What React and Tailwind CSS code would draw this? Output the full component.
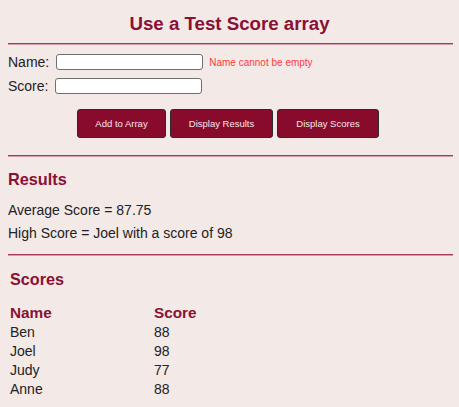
export default function App() {
  const rows = [
    ["Ben", 88],
    ["Joel", 98],
    ["Judy", 77],
    ["Anne", 88],
  ];
  const hr = "ml-[8px] mr-[6px] h-[2px] border-t border-b border-t-[#a83a5a] border-b-[#d59aaa]";
  const btn =
    "h-[29px] rounded-[3px] border border-[#2b2b2b] bg-[#880b2c] text-[9.5px] text-[#f6e6ea] leading-none flex items-center justify-center";
  return (
    <div className="w-[459px] h-[407px] bg-[#f3e9e7] text-[#222] font-['Liberation_Sans',Arial,sans-serif] overflow-hidden">
      <div className="pt-[13px] text-center text-[18.7px] leading-[22px] font-bold text-[#8a1034]">
        Use a Test Score array
      </div>
      <div className={`${hr} mt-[8px]`} />
      <div className="mt-[5px] pl-[8px] text-[14px]">
        <div className="h-[24px] flex items-center">
          <span>Name:</span>
          <div className="ml-[7px] w-[147px] h-[16px] bg-white border border-[#6f6f6f] rounded-[3px]" />
          <span className="ml-[6px] text-[10px] text-[#ff3a3a]">Name cannot be empty</span>
        </div>
        <div className="h-[24px] flex items-center">
          <span>Score:</span>
          <div className="ml-[6.5px] w-[147px] h-[16px] bg-white border border-[#6f6f6f] rounded-[3px]" />
        </div>
      </div>
      <div className="mt-[11px] flex pl-[77px] gap-[4px]">
        <div className={`${btn} w-[89px]`}>Add to Array</div>
        <div className={`${btn} w-[103px]`}>Display Results</div>
        <div className={`${btn} w-[102px]`}>Display Scores</div>
      </div>
      <div className={`${hr} mt-[17px]`} />
      <div className="pl-[8px]">
        <div className="mt-[12px] text-[16.3px] leading-[20px] font-bold text-[#8a1034]">Results</div>
        <div className="mt-[10px] text-[14px] leading-[23px]">Average Score = 87.75</div>
        <div className="text-[14px] leading-[23px]">High Score = Joel with a score of 98</div>
      </div>
      <div className={`${hr} mt-[9px]`} />
      <div className="pl-[10px]">
        <div className="mt-[13px] text-[16.2px] leading-[20px] font-bold text-[#8a1034]">Scores</div>
        <div className="mt-[15px]">
          <div className="flex h-[19px] items-center text-[15.3px] font-bold text-[#8a1034]">
            <span className="w-[144px]">Name</span>
            <span>Score</span>
          </div>
          {rows.map(([n, s]) => (
            <div key={n} className="flex h-[19px] items-center text-[14px]">
              <span className="w-[144px]">{n}</span>
              <span>{s}</span>
            </div>
          ))}
        </div>
      </div>
    </div>
  );
}
